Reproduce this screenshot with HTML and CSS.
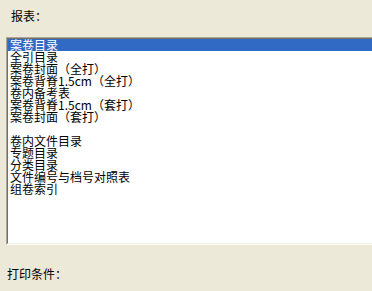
FILE: index.html
```html
<!DOCTYPE html>
<html lang="zh">
<head>
<meta charset="utf-8">
<link rel="stylesheet" href="styles.css">
</head>
<body>
<div class="panel">
  <div class="label label-top">报表：</div>
  <div class="listbox">
    <div class="listbox-inner">
      <div class="item selected">案卷目录</div>
      <div class="item">全引目录</div>
      <div class="item">案卷封面（全打）</div>
      <div class="item">案卷背脊1.5cm（全打）</div>
      <div class="item">卷内备考表</div>
      <div class="item">案卷背脊1.5cm（套打）</div>
      <div class="item">案卷封面（套打）</div>
      <div class="item"></div>
      <div class="item">卷内文件目录</div>
      <div class="item">专题目录</div>
      <div class="item">分类目录</div>
      <div class="item">文件编号与档号对照表</div>
      <div class="item">组卷索引</div>
    </div>
  </div>
  <div class="label label-bottom">打印条件：</div>
</div>
</body>
</html>
```

FILE: styles.css
```css
html, body {
  margin: 0;
  padding: 0;
  background: #ece9d8;
  overflow: hidden;
}
.panel {
  width: 372px;
  height: 291px;
  overflow: hidden;
  font-family: "Noto Sans CJK SC", "Noto Sans", sans-serif;
  font-size: 12px;
  line-height: 12px;
  color: #000;
}
.label {
  height: 12px;
  white-space: nowrap;
}
.label-top {
  margin-top: 10px;
  padding-left: 11px;
}
.label-bottom {
  margin-top: 23px;
  padding-left: 7px;
}
.listbox {
  margin-top: 15px;
  margin-left: 6px;
  width: 400px;
  border-top: 1px solid #aca899;
  border-left: 1px solid #aca899;
  border-bottom: 1px solid #ffffff;
  background: #fff;
}
.listbox-inner {
  height: 204px;
  border-top: 1px solid #716f64;
  border-left: 1px solid #716f64;
  border-bottom: 1px solid #f1efe2;
  background: #fff;
}
.item {
  height: 12px;
  line-height: 12px;
  padding-left: 2px;
  white-space: nowrap;
}
.item.selected {
  background: #316ac5;
  color: #fff;
}
```
